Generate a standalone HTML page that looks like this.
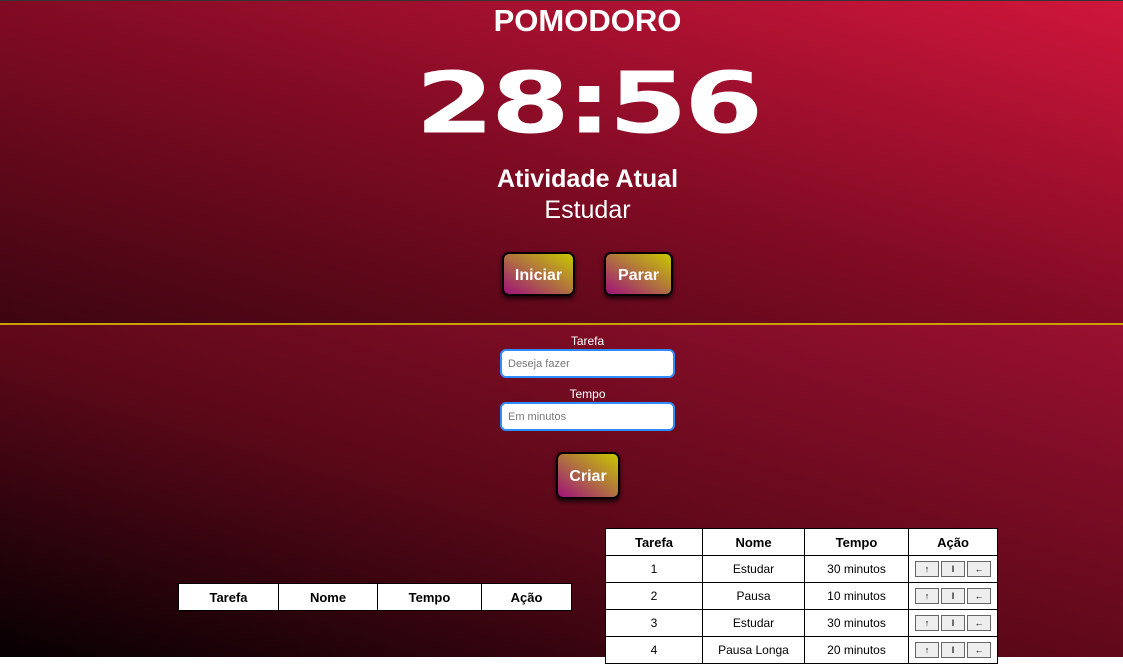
<!DOCTYPE html>
<html><head><meta charset="utf-8"><style>
body{margin:0;width:1123px;height:657px;overflow:hidden;font-family:"Liberation Sans",sans-serif;color:#fff;position:relative}
.top{position:absolute;left:0;top:0;width:1123px;height:324px;background:linear-gradient(to top right,#3c0510 0%,#820b24 50%,#d0163c 100%);border-top:1px solid #333}
.line{position:absolute;left:0;top:323px;width:1123px;height:2px;background:#c9a000}
.bot{position:absolute;left:0;top:325px;width:1123px;height:332px;background:linear-gradient(to top right,#060002 0%,#5a0818 45%,#9a1030 100%)}
.c{position:absolute;left:26px;width:1123px;text-align:center}
.btn{position:absolute;height:44px;border:2px solid #000;border-radius:7px;background:linear-gradient(to top right,#a0107a,#b07040 50%,#c8c800);box-shadow:0 3px 4px rgba(0,0,0,.7);font-weight:bold;font-size:16px;line-height:44px;text-align:center;color:#fff;box-sizing:border-box}
.inp{position:absolute;left:500px;width:175px;height:29px;box-sizing:border-box;border:2px solid #2e8cff;border-radius:6px;background:#fff;color:#777;font-size:11px;line-height:27px;padding-left:6px}
table{position:absolute;border-collapse:collapse;background:#fff;color:#000;font-size:12px}
td,th{border:1px solid #000;text-align:center;padding:0;height:26px}
th{font-size:13px}
.b{display:inline-block;width:22px;height:14px;border:1px solid #666;background:#eee;font-size:9px;line-height:14px;margin:0 1px;vertical-align:middle;font-weight:bold}
</style></head><body>
<div class="top"></div><div class="line"></div><div class="bot"></div>
<div class="c" style="top:3px;font-size:31px;font-weight:bold">POMODORO</div>
<div class="c" style="top:54px;height:100px"><span style="display:inline-block;font-family:'DejaVu Sans',sans-serif;font-weight:bold;font-size:98px;line-height:100px;transform:scale(1.16,0.86);letter-spacing:-3px">28:56</span></div>
<div class="c" style="top:165px;font-size:25px;font-weight:bold">Atividade Atual</div>
<div class="c" style="top:196px;font-size:25px">Estudar</div>
<div class="btn" style="left:502px;top:252px;width:73px">Iniciar</div>
<div class="btn" style="left:604px;top:252px;width:69px">Parar</div>
<div class="c" style="top:334px;font-size:12px">Tarefa</div>
<div class="inp" style="top:349px">Deseja fazer</div>
<div class="c" style="top:387px;font-size:12px">Tempo</div>
<div class="inp" style="top:402px">Em minutos</div>
<div class="btn" style="left:556px;top:452px;width:64px;height:47px;line-height:45px">Criar</div>
<table style="left:178px;top:583px;width:394px"><tr><th style="width:99px">Tarefa</th><th style="width:98px">Nome</th><th style="width:103px">Tempo</th><th>Ação</th></tr></table>
<table style="left:605px;top:528px;width:393px">
<tr><th style="width:96px">Tarefa</th><th style="width:101px">Nome</th><th style="width:103px">Tempo</th><th>Ação</th></tr>
<tr><td>1</td><td>Estudar</td><td>30 minutos</td><td><span class="b">↑</span><span class="b">ǀ</span><span class="b">←</span></td></tr>
<tr><td>2</td><td>Pausa</td><td>10 minutos</td><td><span class="b">↑</span><span class="b">ǀ</span><span class="b">←</span></td></tr>
<tr><td>3</td><td>Estudar</td><td>30 minutos</td><td><span class="b">↑</span><span class="b">ǀ</span><span class="b">←</span></td></tr>
<tr><td>4</td><td>Pausa Longa</td><td>20 minutos</td><td><span class="b">↑</span><span class="b">ǀ</span><span class="b">←</span></td></tr>
</table>
</body></html>
